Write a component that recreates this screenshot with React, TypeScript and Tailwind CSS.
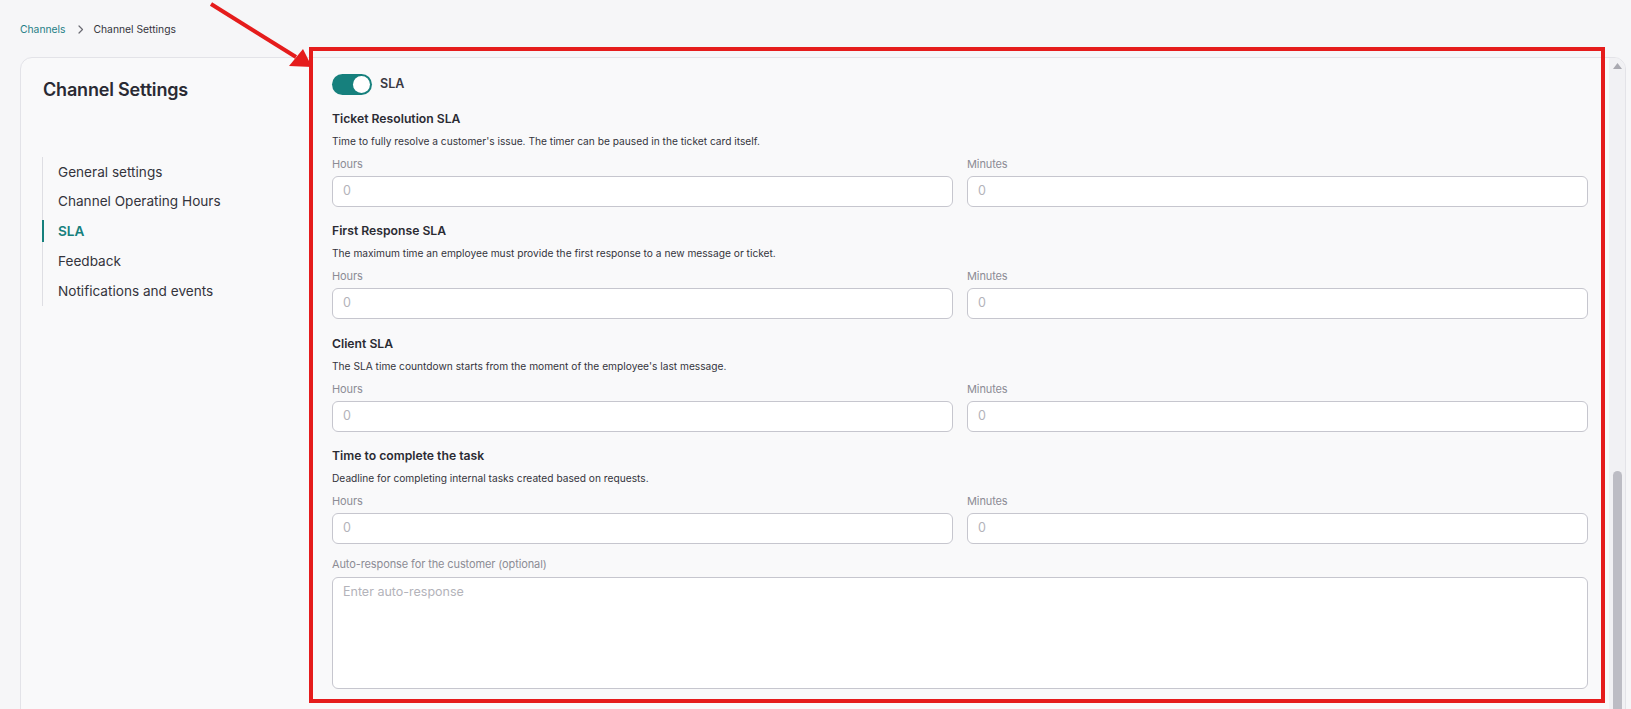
import React from "react";

const Field = ({ label }: { label: string }) => (
  <div className="flex flex-col">
    <div className="text-[11px] leading-[16px] text-[#8c8c95] tracking-[-0.01em]">{label}</div>
    <div className="mt-[4px] h-[31px] rounded-[6px] border border-[#c6c6ce] bg-white flex items-center pl-[10px] text-[12.5px] text-[#b3b3ba]">
      0
    </div>
  </div>
);

const Section = ({ title, desc, first }: { title: string; desc: string; first?: boolean }) => (
  <div className={first ? "mt-[13.5px]" : "mt-[14.5px]"}>
    <div className="h-[20px] leading-[20px] text-[12.2px] font-semibold text-[#2b2b33]">{title}</div>
    <div className="mt-[4px] leading-[16px] text-[10.2px] text-[#34343c]">{desc}</div>
    <div className="mt-[7px] grid grid-cols-2 gap-x-[14px]">
      <Field label="Hours" />
      <Field label="Minutes" />
    </div>
  </div>
);

const navItems = [
  "General settings",
  "Channel Operating Hours",
  "SLA",
  "Feedback",
  "Notifications and events",
];

export default function App() {
  return (
    <div
      className="relative w-full h-[709px] overflow-hidden bg-[#f6f6f8]"
      style={{ fontFamily: "Inter, 'Noto Sans', sans-serif" }}
    >
      {/* Breadcrumb */}
      <div className="pl-[20px] pt-[22px] h-[37px] flex items-start leading-[15px] text-[10.3px]">
        <span className="text-[#1f7e86]">Channels</span>
        <svg className="ml-[12px] mt-[3px]" width="6" height="9" viewBox="0 0 6 9" fill="none">
          <path d="M1 1l3.5 3.5L1 8" stroke="#6b6b73" strokeWidth="1.2" strokeLinecap="round" strokeLinejoin="round" />
        </svg>
        <span className="ml-[10px] text-[#34343c]">Channel Settings</span>
      </div>

      {/* Card */}
      <div className="ml-[20px] mt-[20px] w-[1606px] h-[700px] rounded-t-[12px] border border-[#e3e3e8] bg-[#f9f9fa] flex overflow-hidden">
        {/* Left column */}
        <div className="w-[289px] shrink-0 pl-[21px] pt-[20px]">
          <div className="ml-[1px] text-[18px] leading-[24px] font-semibold text-[#2a2a33] tracking-[-0.01em]">
            Channel Settings
          </div>
          <div className="mt-[55px] border-l border-[#dedee3] flex flex-col">
            {navItems.map((item) => {
              const active = item === "SLA";
              return (
                <div key={item} className="relative h-[29.75px] flex items-center pl-[15px]">
                  {active && (
                    <div className="absolute left-[-1px] top-[3.9px] w-[2px] h-[22px] bg-[#16807d]" />
                  )}
                  <span
                    className={
                      active
                        ? "text-[13.6px] font-semibold text-[#16807d]"
                        : "text-[13.6px] text-[#34343c]"
                    }
                  >
                    {item}
                  </span>
                </div>
              );
            })}
          </div>
        </div>

        {/* Right content */}
        <div className="flex-1 pl-[22px] pr-[21px] pt-[16px]">
          <div className="flex items-center h-[21px]">
            <div className="w-[40px] h-[21px] rounded-full bg-[#16807d] flex items-center justify-end pr-[2px]">
              <div className="w-[17px] h-[17px] rounded-full bg-white" />
            </div>
            <span className="ml-[8px] text-[12.5px] font-semibold text-[#3a3a44]">SLA</span>
          </div>

          <Section
            first
            title="Ticket Resolution SLA"
            desc="Time to fully resolve a customer's issue. The timer can be paused in the ticket card itself."
          />
          <Section
            title="First Response SLA"
            desc="The maximum time an employee must provide the first response to a new message or ticket."
          />
          <Section
            title="Client SLA"
            desc="The SLA time countdown starts from the moment of the employee's last message."
          />
          <Section
            title="Time to complete the task"
            desc="Deadline for completing internal tasks created based on requests."
          />

          <div className="mt-[12px] text-[11px] leading-[16px] text-[#8c8c95] tracking-[-0.01em]">
            Auto-response for the customer (optional)
          </div>
          <div className="mt-[5px] h-[112px] rounded-[6px] border border-[#c6c6ce] bg-white pl-[10px] pt-[6px] text-[12.5px] leading-[15px] text-[#b3b3ba]">
            Enter auto-response
          </div>
        </div>

        {/* Scrollbar */}
        <div className="w-[16px] shrink-0 bg-[#f1f1f4] flex flex-col items-center pt-[5px]">
          <svg width="9" height="6" viewBox="0 0 9 6">
            <path d="M4.5 0L9 6H0z" fill="#a9a9b1" />
          </svg>
          <div className="mt-[402px] w-[9px] h-[260px] rounded-full bg-[#bcbcc4]" />
        </div>
      </div>

      {/* Annotation: red frame */}
      <div className="absolute left-[309px] top-[47px] w-[1296px] h-[656px] border-4 border-[#e51c1c] pointer-events-none" />

      {/* Annotation: arrow */}
      <svg className="absolute left-0 top-0 pointer-events-none" width="340" height="80" viewBox="0 0 340 80">
        <line x1="211" y1="4" x2="296" y2="57" stroke="#e51c1c" strokeWidth="4" />
        <path d="M312 67 L289 66 L303 49 Z" fill="#e51c1c" />
      </svg>
    </div>
  );
}
